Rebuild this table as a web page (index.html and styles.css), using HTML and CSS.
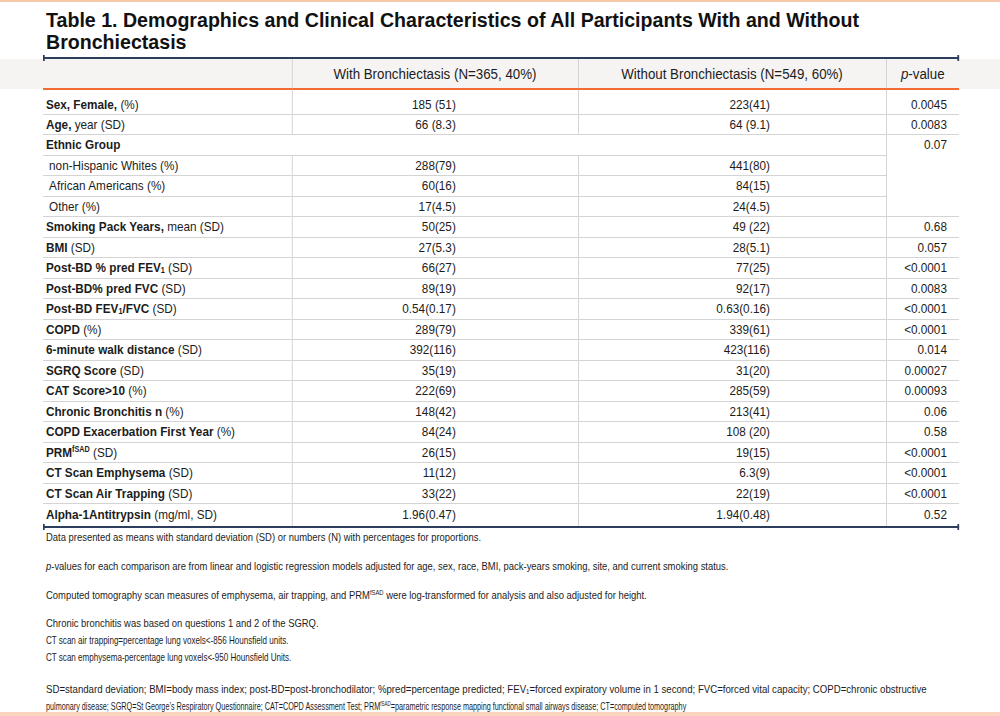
FILE: index.html
```html
<!DOCTYPE html>
<html lang="en">
<head>
<meta charset="utf-8">
<title>Table 1</title>
<link rel="stylesheet" href="styles.css">
</head>
<body>
<div class="page">
  <h1 class="title">Table 1. Demographics and Clinical Characteristics of All Participants With and Without Bronchiectasis</h1>
  <div class="table-wrap">
    <table class="data">
      <colgroup><col class="c1"><col class="c2"><col class="c3"><col class="c4"></colgroup>
      <thead>
        <tr><th class="lab"></th><th>With Bronchiectasis (N=365, 40%)</th><th>Without Bronchiectasis (N=549, 60%)</th><th class="pv"><i>p</i>-value</th></tr>
      </thead>
      <tbody>
        <tr class="first"><td class="lab"><b>Sex, Female,</b> (%)</td><td class="v1">185 (51)</td><td class="v2">223(41)</td><td class="v3">0.0045</td></tr>
        <tr><td class="lab"><b>Age,</b> year (SD)</td><td class="v1">66 (8.3)</td><td class="v2">64 (9.1)</td><td class="v3">0.0083</td></tr>
        <tr><td class="lab" colspan="3"><b>Ethnic Group</b></td><td class="v3 top" rowspan="4">0.07</td></tr>
        <tr><td class="lab sub">non-Hispanic Whites (%)</td><td class="v1">288(79)</td><td class="v2">441(80)</td></tr>
        <tr><td class="lab sub">African Americans (%)</td><td class="v1">60(16)</td><td class="v2">84(15)</td></tr>
        <tr><td class="lab sub">Other (%)</td><td class="v1">17(4.5)</td><td class="v2">24(4.5)</td></tr>
        <tr><td class="lab"><b>Smoking Pack Years,</b> mean (SD)</td><td class="v1">50(25)</td><td class="v2">49 (22)</td><td class="v3">0.68</td></tr>
        <tr><td class="lab"><b>BMI</b> (SD)</td><td class="v1">27(5.3)</td><td class="v2">28(5.1)</td><td class="v3">0.057</td></tr>
        <tr><td class="lab"><b>Post-BD % pred FEV<sub>1</sub></b> (SD)</td><td class="v1">66(27)</td><td class="v2">77(25)</td><td class="v3">&lt;0.0001</td></tr>
        <tr><td class="lab"><b>Post-BD% pred FVC</b> (SD)</td><td class="v1">89(19)</td><td class="v2">92(17)</td><td class="v3">0.0083</td></tr>
        <tr><td class="lab"><b>Post-BD FEV<sub>1</sub>/FVC</b> (SD)</td><td class="v1">0.54(0.17)</td><td class="v2">0.63(0.16)</td><td class="v3">&lt;0.0001</td></tr>
        <tr><td class="lab"><b>COPD</b> (%)</td><td class="v1">289(79)</td><td class="v2">339(61)</td><td class="v3">&lt;0.0001</td></tr>
        <tr><td class="lab"><b>6-minute walk distance</b> (SD)</td><td class="v1">392(116)</td><td class="v2">423(116)</td><td class="v3">0.014</td></tr>
        <tr><td class="lab"><b>SGRQ Score</b> (SD)</td><td class="v1">35(19)</td><td class="v2">31(20)</td><td class="v3">0.00027</td></tr>
        <tr><td class="lab"><b>CAT Score&gt;10</b> (%)</td><td class="v1">222(69)</td><td class="v2">285(59)</td><td class="v3">0.00093</td></tr>
        <tr><td class="lab"><b>Chronic Bronchitis n</b> (%)</td><td class="v1">148(42)</td><td class="v2">213(41)</td><td class="v3">0.06</td></tr>
        <tr><td class="lab"><b>COPD Exacerbation First Year</b> (%)</td><td class="v1">84(24)</td><td class="v2">108 (20)</td><td class="v3">0.58</td></tr>
        <tr><td class="lab"><b>PRM<sup>fSAD</sup></b> (SD)</td><td class="v1">26(15)</td><td class="v2">19(15)</td><td class="v3">&lt;0.0001</td></tr>
        <tr><td class="lab"><b>CT Scan Emphysema</b> (SD)</td><td class="v1">11(12)</td><td class="v2">6.3(9)</td><td class="v3">&lt;0.0001</td></tr>
        <tr><td class="lab"><b>CT Scan Air Trapping</b> (SD)</td><td class="v1">33(22)</td><td class="v2">22(19)</td><td class="v3">&lt;0.0001</td></tr>
        <tr class="last"><td class="lab"><b>Alpha-1Antitrypsin</b> (mg/ml, SD)</td><td class="v1">1.96(0.47)</td><td class="v2">1.94(0.48)</td><td class="v3">0.52</td></tr>
      </tbody>
    </table>
  </div>
  <div class="notes">
    <p class="note">Data presented as means with standard deviation (SD) or numbers (N) with percentages for proportions.</p>
    <p class="note"><i>p</i>-values for each comparison are from linear and logistic regression models adjusted for age, sex, race, BMI, pack-years smoking, site, and current smoking status.</p>
    <p class="note">Computed tomography scan measures of emphysema, air trapping, and PRM<sup>fSAD</sup> were log-transformed for analysis and also adjusted for height.</p>
    <p class="note">Chronic bronchitis was based on questions 1 and 2 of the SGRQ.</p>
    <p class="ct">CT scan air trapping=percentage lung voxels&lt;-856 Hounsfield units.</p>
    <p class="ct">CT scan emphysema-percentage lung voxels&lt;-950 Hounsfield Units.</p>
    <p class="abbr abbr-1">SD=standard deviation; BMI=body mass index; post-BD=post-bronchodilator; %pred=percentage predicted; FEV<sub>1</sub>=forced expiratory volume in 1 second; FVC=forced vital capacity; COPD=chronic obstructive</p>
    <p class="abbr abbr-2">pulmonary disease; SGRQ=St George’s Respiratory Questionnaire; CAT=COPD Assessment Test; PRM<sup>fSAD</sup>=parametric response mapping functional small airways disease; CT=computed tomography</p>
  </div>
</div>
</body>
</html>
```

FILE: styles.css
```css
html, body {
  margin: 0;
  padding: 0;
  background: #ffffff;
}

body {
  font-family: "Liberation Sans", Arial, sans-serif;
  color: #1c1c1c;
}

.page {
  height: 716px;
  box-sizing: border-box;
  border-top: 2px solid #f8c8ab;
  border-bottom: 4px solid #fbd4bf;
  overflow: hidden;
  display: flex;
  flex-direction: column;
}

.title {
  margin: 7px 0 0 46px;
  font-weight: bold;
  font-size: 19.6px;
  line-height: 22px;
  color: #111;
  width: 880px;
}

/* The table is set in Arial and condensed horizontally (Arial Narrow look). */
.table-wrap {
  position: relative;
  margin: 4px 0 0 43px;
  width: 1053px;
  flex: none;
  border-top: 2px solid #2d3e5c;
  border-bottom: 2px solid #2d3e5c;
  transform: scaleX(0.87);
  transform-origin: 0 0;
}

.table-wrap::before,
.table-wrap::after {
  content: "";
  position: absolute;
  left: 0;
  right: 0;
  height: 6px;
  box-sizing: border-box;
  border-left: 2px solid #2d3e5c;
  border-right: 2px solid #2d3e5c;
}
.table-wrap::before { top: -4px; }
.table-wrap::after { bottom: -4px; }

.data {
  width: 1053px;
  table-layout: fixed;
  border-collapse: collapse;
  font-size: 13.5px;
}

.c1 { width: 286px; }
.c2 { width: 329px; }
.c3 { width: 354px; }
.c4 { width: 84px; }

.data th {
  height: 29px;
  padding: 0;
  font-weight: normal;
  font-size: 15.3px;
  text-align: center;
  background: #f6f4f3;
  border-left: 1px solid #cfcfcf;
  border-bottom: 2px solid #f26b34;
  color: #1c1c1c;
}
.data th:first-child {
  border-left: none;
  box-shadow: -50px 0 0 #f6f4f3;
}
.data th:last-child {
  box-shadow: 50px 0 0 #f6f4f3;
}

.data td {
  height: 20.5px;
  padding: 0;
  box-sizing: border-box;
  border-left: 1px solid #cfcfcf;
  border-bottom: 1px solid #d4d4d4;
  vertical-align: middle;
  white-space: nowrap;
}
.data td.lab { border-left: none; padding-left: 3.4px; }
.data td.sub { padding-left: 7px; }
.data td.v1 { text-align: right; padding-right: 140px; }
.data td.v2 { text-align: right; padding-right: 133px; }
.data td.v3 { text-align: right; padding-right: 14px; }
.data td.top { vertical-align: top; padding-top: 2px; }

.data tr.first td { height: 25px; padding-top: 5px; }
.data tr.last td { border-bottom: none; height: 22px; }

.data sub, .notes sub {
  font-size: 0.62em;
  vertical-align: -0.15em;
  line-height: 0;
}
.data sup, .notes sup {
  font-size: 0.62em;
  vertical-align: 0.55em;
  line-height: 0;
}

.notes {
  padding-left: 46px;
  color: #1c1c1c;
}
.notes p {
  margin: 0;
  line-height: 17px;
  white-space: nowrap;
  transform-origin: 0 50%;
}
.notes .note {
  font-size: 11.5px;
  transform: scaleX(0.82);
  margin-top: 12px;
}
.notes .note:first-child { margin-top: 1px; }
.notes .note:nth-child(4) { margin-top: 11px; }
.notes .ct {
  font-size: 11px;
  transform: scaleX(0.732);
}
.notes .abbr {
  font-size: 10.5px;
}
.notes .abbr-1 {
  margin-top: 15px;
  transform: scaleX(0.918);
}
.notes .abbr-2 {
  transform: scaleX(0.69);
}
```
